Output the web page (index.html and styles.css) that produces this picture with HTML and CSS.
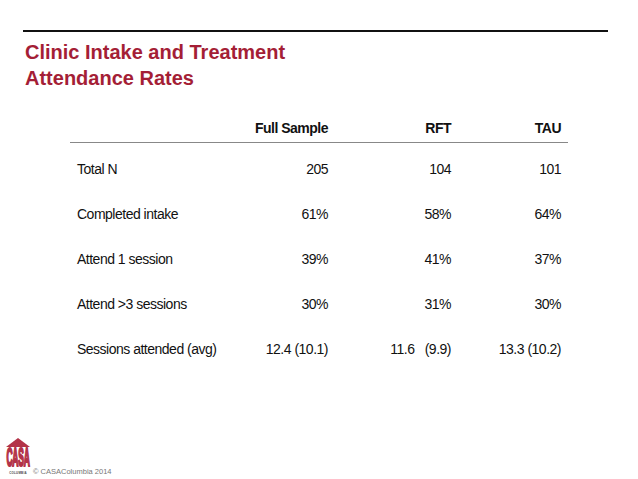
FILE: index.html
```html
<!DOCTYPE html>
<html>
<head>
<meta charset="utf-8">
<link rel="stylesheet" href="styles.css">
</head>
<body>
<div class="slide">
  <div class="rule"></div>
  <h1 class="title">Clinic Intake and Treatment<br>Attendance Rates</h1>
  <div class="data">
    <div class="row head">
      <span class="lab"></span><span>Full Sample</span><span>RFT</span><span>TAU</span>
    </div>
    <div class="row first"><span class="lab">Total N</span><span>205</span><span>104</span><span>101</span></div>
    <div class="row"><span class="lab">Completed intake</span><span>61%</span><span>58%</span><span>64%</span></div>
    <div class="row"><span class="lab">Attend 1 session</span><span>39%</span><span>41%</span><span>37%</span></div>
    <div class="row"><span class="lab">Attend &gt;3 sessions</span><span>30%</span><span>31%</span><span>30%</span></div>
    <div class="row"><span class="lab">Sessions attended (avg)</span><span>12.4 (10.1)</span><span>11.6&nbsp;&nbsp;&nbsp;(9.9)</span><span>13.3 (10.2)</span></div>
  </div>
  <div class="footer">
    <svg class="logo" width="26" height="39" viewBox="0 0 26 39">
      <polygon points="1,10 13,1 25,10" fill="#b33348"/>
      <text transform="translate(13,29) scale(0.85,2.5)" x="0" y="0" text-anchor="middle" font-family="Liberation Sans, sans-serif" font-weight="bold" font-size="10" letter-spacing="-0.3" fill="#b33348" stroke="#b33348" stroke-width="0.9">CASA</text>
      <text transform="translate(13,37) scale(0.85,1)" x="0" y="0" text-anchor="middle" font-family="Liberation Sans, sans-serif" font-size="3.4" font-weight="bold" letter-spacing="0.3" fill="#444">COLUMBIA</text>
    </svg>
    <span class="copy">© CASAColumbia 2014</span>
  </div>
</div>
</body>
</html>
```
FILE: styles.css
```css
html, body {
  margin: 0;
  padding: 0;
  background: #fff;
}
.slide {
  width: 638px;
  height: 479px;
  position: relative;
  font-family: "Liberation Sans", Arial, sans-serif;
  overflow: hidden;
}
.rule {
  margin: 30px 30px 0 23px;
  height: 2px;
  background: #111;
}
.title {
  margin: 7px 0 0 25px;
  font-size: 20px;
  line-height: 26px;
  font-weight: bold;
  color: #a41e36;
}
.data {
  margin: 29px 0 0 70px;
  width: 498px;
  font-size: 14px;
  letter-spacing: -0.5px;
  color: #111;
}
.row {
  display: grid;
  grid-template-columns: 160px 98px 123px 110px;
  padding-right: 7px;
  height: 45px;
  align-items: center;
}
.row span { text-align: right; white-space: nowrap; }
.row span.lab { text-align: left; padding-left: 7px; }
.row.head {
  height: auto;
  font-weight: bold;
  padding-bottom: 6px;
  border-bottom: 1px solid #888;
}
.row.first { margin-top: 3px; }
.footer {
  position: absolute;
  left: 5px;
  top: 437px;
  display: flex;
  align-items: flex-end;
  gap: 2px;
}
.logo { display: block; }
.copy {
  font-size: 7.5px;
  color: #777;
  margin-bottom: 0;
}
```
